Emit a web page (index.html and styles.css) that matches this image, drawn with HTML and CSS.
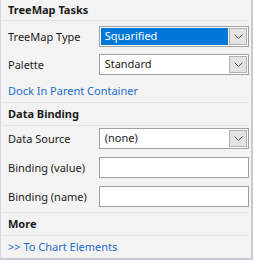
FILE: index.html
```html
<!DOCTYPE html>
<html lang="en">
<head>
  <meta charset="UTF-8">
  <title>TreeMap Tasks</title>
  <link rel="stylesheet" href="styles.css">
</head>
<body>

  <div class="panel">
    <!-- TreeMap Tasks -->
    <div class="section-title">TreeMap Tasks</div>
    <div class="section first">
      <div class="row">
        <span class="label">TreeMap Type</span>
        <div class="combo selected">
          <span class="combo-text">Squarified</span>
          <span class="combo-btn">
            <svg width="9" height="5" viewBox="0 0 9 5"><path d="M0.5 0.5 L4.5 4.5 L8.5 0.5" fill="none" stroke="#555" stroke-width="1"/></svg>
          </span>
        </div>
      </div>
      <div class="row">
        <span class="label">Palette</span>
        <div class="combo">
          <span class="combo-text">Standard</span>
          <span class="combo-btn">
            <svg width="9" height="5" viewBox="0 0 9 5"><path d="M0.5 0.5 L4.5 4.5 L8.5 0.5" fill="none" stroke="#555" stroke-width="1"/></svg>
          </span>
        </div>
      </div>
      <a class="link dock-link" href="#">Dock In Parent Container</a>
    </div>

    <!-- Data Binding -->
    <div class="section-title">Data Binding</div>
    <div class="section binding">
      <div class="row">
        <span class="label">Data Source</span>
        <div class="combo">
          <span class="combo-text">(none)</span>
          <span class="combo-btn">
            <svg width="9" height="5" viewBox="0 0 9 5"><path d="M0.5 0.5 L4.5 4.5 L8.5 0.5" fill="none" stroke="#555" stroke-width="1"/></svg>
          </span>
        </div>
      </div>
      <div class="row">
        <span class="label">Binding (value)</span>
        <div class="textbox"></div>
      </div>
      <div class="row">
        <span class="label">Binding (name)</span>
        <div class="textbox"></div>
      </div>
    </div>

    <!-- More -->
    <div class="section-title">More</div>
    <a class="link more-link" href="#">&gt;&gt; To Chart Elements</a>
  </div>

</body>
</html>
```

FILE: styles.css
```css
body {
  margin: 0;
  padding: 0;
  font-family: 'Noto Sans', sans-serif;
  font-size: 11px;
  color: #1b1b1b;
  background-color: #ffffff;
}

.panel {
  width: 253px;
  height: 260px;
  box-sizing: border-box;
  background-color: #f3f3f3;
  border-left: 1px solid #d4d4e0;
  border-right: 2px solid #c8c8d8;
  border-bottom: 2px solid #c8c8d8;
  display: flex;
  flex-direction: column;
}

.section-title {
  height: 22px;
  line-height: 22px;
  font-size: 11px;
  font-weight: bold;
  border-bottom: 1px solid #e3e3e3;
  margin: 0 2px;
  padding-left: 5px;
}

.panel > .section-title:first-child {
  height: 20px;
  line-height: 20px;
}

.section {
  display: flex;
  flex-direction: column;
  border-bottom: 1px solid #e3e3e3;
  margin: 0 2px;
}

.section.first {
  padding-top: 5px;
  gap: 7px;
}

.section.binding {
  padding-top: 2px;
  padding-bottom: 5px;
  gap: 8px;
}

.row {
  display: flex;
  align-items: center;
  height: 21px;
}

.label {
  width: 96px;
  padding-left: 5px;
  box-sizing: border-box;
  white-space: nowrap;
}

.combo {
  width: 151px;
  height: 21px;
  box-sizing: border-box;
  border: 1px solid #a0a0a0;
  background-color: #ffffff;
  display: flex;
  align-items: center;
  padding: 1px;
}

.combo-text {
  flex: 1;
  height: 17px;
  line-height: 16px;
  padding-left: 4px;
}

.combo.selected .combo-text {
  background-color: #0078d7;
  color: #ffffff;
}

.combo-btn {
  width: 18px;
  height: 17px;
  box-sizing: border-box;
  margin-left: 1px;
  background-color: #e3e3e3;
  border: 1px solid #b0b0b0;
  display: flex;
  align-items: center;
  justify-content: center;
}

.textbox {
  width: 151px;
  height: 21px;
  box-sizing: border-box;
  border: 1px solid #a0a0a0;
  background-color: #ffffff;
}

.link {
  color: #1a6ccf;
  text-decoration: none;
  padding-left: 5px;
}

.dock-link {
  margin-top: -1px;
  height: 21px;
  line-height: 20px;
}

.more-link {
  height: 22px;
  line-height: 22px;
  margin: 0 2px;
}
```
